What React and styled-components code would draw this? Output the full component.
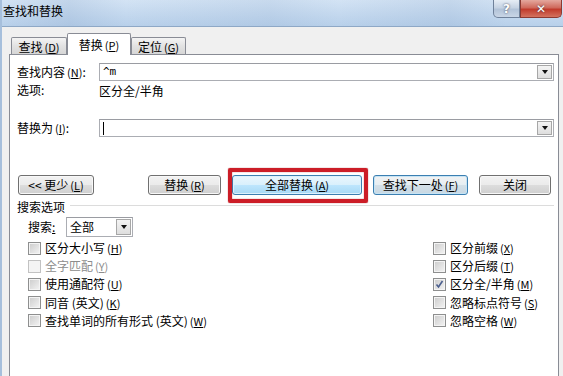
import React from 'react'
import styled, { createGlobalStyle } from 'styled-components'

const GlobalStyle = createGlobalStyle`
  html, body { margin: 0; padding: 0; }
  body {
    width: 563px;
    height: 376px;
    overflow: hidden;
    background: #f0f0f0;
    font-family: "Noto Sans CJK SC", "DejaVu Sans", sans-serif;
    font-size: 12px;
    color: #000;
  }
`

const Window = styled.div`
  display: flex;
  flex-direction: column;
  height: 376px;
  border-left: 2px solid #a6bfdc;
  box-sizing: border-box;
`

const TitleBar = styled.div`
  height: 26px;
  display: flex;
  align-items: flex-start;
  padding-left: 1px;
  background: linear-gradient(90deg, rgba(255,255,255,0) 0%, rgba(120,150,190,0.18) 12%, rgba(255,255,255,0) 22%, rgba(120,150,190,0.12) 48%, rgba(255,255,255,0) 60%, rgba(120,150,190,0.15) 80%, rgba(255,255,255,0) 90%),
    linear-gradient(#d3e3f4, #b8d0ea);
  border-bottom: 1px solid #8ea8c6;
`

const Title = styled.span`
  line-height: 22px;
  flex: 1;
`

const CaptionButton = styled.div`
  height: 18px;
  width: ${p => p.$w}px;
  box-sizing: border-box;
  border: 1px solid ${p => p.$close ? '#8c3a32' : '#6f819a'};
  border-top: none;
  border-radius: ${p => p.$close ? '0 0 5px 0' : '0 0 0 5px'};
  background: ${p => p.$close
    ? 'linear-gradient(#e4a89e, #cf6a5c 45%, #c13b2c 55%, #d4735f)'
    : 'linear-gradient(#e6edf5, #c6d3e3 45%, #b2c3d8 55%, #c9d6e6)'};
  display: flex;
  align-items: center;
  justify-content: center;
  color: #fff;
  font-family: "DejaVu Sans", sans-serif;
  font-weight: bold;
  font-size: 12px;
  text-shadow: 0 0 2px #334;
  margin-right: ${p => p.$close ? 1 : 0}px;
`

const Body = styled.div`
  flex: 1;
  display: flex;
  flex-direction: column;
  padding: 10px 4px 0 7px;
  min-height: 0;
`

const TabStrip = styled.div`
  display: flex;
  align-items: flex-end;
  height: 17px;
  padding-left: 2px;
  position: relative;
  z-index: 1;
`

const Tab = styled.div`
  width: ${p => p.$w}px;
  height: ${p => p.$active ? 22 : 17}px;
  box-sizing: border-box;
  border: 1px solid #898c95;
  border-bottom: none;
  border-radius: 2px 2px 0 0;
  background: ${p => p.$active ? '#fff' : 'linear-gradient(#f4f4f4, #e2e2e2 50%, #d6d6d6)'};
  margin-bottom: ${p => p.$active ? -1 : 0}px;
  display: flex;
  align-items: center;
  justify-content: center;
  padding-top: ${p => p.$active ? 0 : 1}px;
  line-height: 14px;
`

const Panel = styled.div`
  flex: 1;
  background: #fff;
  border: 1px solid #898c95;
  border-bottom: none;
  padding: 8px 4px 0 7px;
  display: flex;
  flex-direction: column;
`

const FieldRow = styled.div`
  display: flex;
  align-items: center;
  margin-top: ${p => p.$mt || 0}px;
  height: ${p => p.$h || 18}px;
`

const Label = styled.span`
  width: ${p => p.$w || 82}px;
  flex: none;
  line-height: 16px;
`

const Combo = styled.div`
  flex: ${p => p.$w ? 'none' : 1};
  width: ${p => p.$w ? p.$w + 'px' : 'auto'};
  height: ${p => p.$h || 18}px;
  box-sizing: border-box;
  border: 1px solid #abadb3;
  border-top-color: #9a9ca2;
  background: #fff;
  display: flex;
  align-items: center;
  padding: 0 1px 0 3px;
`

const ComboText = styled.span`
  flex: 1;
  font-family: ${p => p.$mono ? '"DejaVu Sans Mono", monospace' : 'inherit'};
  font-size: ${p => p.$mono ? 11 : 12}px;
  line-height: 14px;
`

const Caret = styled.span`
  display: block;
  width: 1px;
  height: 13px;
  background: #000;
  flex: none;
`

const Spacer = styled.span`
  flex: 1;
`

const DropButton = styled.span`
  flex: none;
  width: 15px;
  height: ${p => p.$h || 14}px;
  box-sizing: border-box;
  border: 1px solid #a7a7a7;
  background: linear-gradient(#f4f4f4, #dedede);
  display: flex;
  align-items: center;
  justify-content: center;
  &::after {
    content: "";
    border-left: 3.5px solid transparent;
    border-right: 3.5px solid transparent;
    border-top: 4px solid #111;
  }
`

const ButtonRow = styled.div`
  display: flex;
  gap: 11px;
  margin-top: 38px;
  padding-left: 1px;
`

const Button = styled.button`
  width: ${p => p.$w}px;
  height: 20px;
  margin-left: ${p => p.$ml || 0}px;
  padding: 0;
  box-sizing: border-box;
  font: inherit;
  color: #000;
  line-height: 14px;
  border-radius: 3px;
  border: 1px solid ${p => p.$variant ? '#3c7fb1' : '#707070'};
  box-shadow: inset 0 0 0 1px ${p => p.$variant === 'hot' ? '#dcf1fc' : p.$variant ? '#c6e4f5' : '#f8f8f8'};
  background: ${p => p.$variant === 'hot'
    ? 'linear-gradient(#eaf6fd, #d9f0fc 50%, #bee6fd 50%, #a7d9f5)'
    : p.$variant
      ? 'linear-gradient(#f2f2f2, #e6eef3 50%, #d4e0e8 50%, #c8d8e3)'
      : 'linear-gradient(#f2f2f2, #ebebeb 50%, #dddddd 50%, #cfcfcf)'};
  position: relative;
  ${p => p.$marked && `
    &::after {
      content: "";
      position: absolute;
      top: -8px;
      left: -5px;
      right: -7px;
      bottom: -9px;
      border: 4px solid #cc1d27;
      border-radius: 2px;
      box-shadow: 0 0 1px #8a0f14, inset 0 0 1px #8a0f14;
    }
  `}
`

const SectionHeader = styled.div`
  display: flex;
  margin-top: 4px;
  height: 16px;
  line-height: 16px;
  &::after {
    content: "";
    flex: 1;
    margin: 6px 0 0 5px;
    height: 0;
    border-top: 1px solid #dcdcdc;
  }
`

const SearchRow = styled.div`
  display: flex;
  align-items: center;
  margin-top: 2px;
  padding-left: 11px;
  height: 20px;
`

const OptionGrid = styled.div`
  display: grid;
  grid-template-columns: 405px 1fr;
  grid-auto-rows: 18.2px;
  grid-auto-flow: column;
  grid-template-rows: repeat(5, 18.2px);
  margin-top: 2px;
  padding-left: 11px;
`

const Option = styled.label`
  display: flex;
  align-items: center;
  gap: 4px;
  color: ${p => p.$disabled ? '#8d8d8d' : '#000'};
  line-height: 14px;
`

const Box = styled.span`
  width: 13px;
  height: 13px;
  flex: none;
  box-sizing: border-box;
  border: 1px solid ${p => p.$disabled ? '#c2c2c2' : '#8e8f8f'};
  background: ${p => p.$disabled ? '#f4f4f4' : 'linear-gradient(135deg, #cbcbcb, #f4f4f4)'};
  box-shadow: inset 0 0 0 1px ${p => p.$disabled ? '#f4f4f4' : '#f4f4f4'};
  display: flex;
  align-items: center;
  justify-content: center;
`

const Key = styled.span`
  margin-left: 2px;
  font-size: 11px;
  u { text-decoration: underline; }
`

const hk = k => <Key>(<u>{k}</u>)</Key>

function Check({ label, k, checked, disabled }) {
  return (
    <Option $disabled={disabled}>
      <Box $disabled={disabled}>
        {checked && (
          <svg width="9" height="9" viewBox="0 0 9 9">
            <path d="M1.5 4.5 L3.5 7 L7.5 1" fill="none" stroke="#4b5f8e" strokeWidth="1.6" />
          </svg>
        )}
      </Box>
      <span>{label}{hk(k)}</span>
    </Option>
  )
}

const leftOptions = [
  { label: '区分大小写', k: 'H' },
  { label: '全字匹配', k: 'Y', disabled: true },
  { label: '使用通配符', k: 'U' },
  { label: '同音 (英文)', k: 'K' },
  { label: '查找单词的所有形式 (英文)', k: 'W' },
]

const rightOptions = [
  { label: '区分前缀', k: 'X' },
  { label: '区分后缀', k: 'T' },
  { label: '区分全/半角', k: 'M', checked: true },
  { label: '忽略标点符号', k: 'S' },
  { label: '忽略空格', k: 'W' },
]

export default function App() {
  return (
    <>
      <GlobalStyle />
      <Window>
        <TitleBar>
          <Title>查找和替换</Title>
          <CaptionButton $w={27}>?</CaptionButton>
          <CaptionButton $w={42} $close>✕</CaptionButton>
        </TitleBar>
        <Body>
          <TabStrip>
            <Tab $w={56}>查找{hk('D')}</Tab>
            <Tab $w={64} $active>替换{hk('P')}</Tab>
            <Tab $w={55}>定位{hk('G')}</Tab>
          </TabStrip>
          <Panel>
            <FieldRow>
              <Label>查找内容{hk('N')}:</Label>
              <Combo>
                <ComboText $mono>^m</ComboText>
                <DropButton />
              </Combo>
            </FieldRow>
            <FieldRow $mt={1} $h={16}>
              <Label>选项:</Label>
              <span>区分全/半角</span>
            </FieldRow>
            <FieldRow $mt={21}>
              <Label>替换为{hk('I')}:</Label>
              <Combo>
                <Caret />
                <Spacer />
                <DropButton />
              </Combo>
            </FieldRow>
            <ButtonRow>
              <Button $w={76}>&lt;&lt; 更少{hk('L')}</Button>
              <Button $w={73} $ml={43}>替换{hk('R')}</Button>
              <Button $w={130} $variant="hot" $marked>全部替换{hk('A')}</Button>
              <Button $w={95} $variant="default">查找下一处{hk('F')}</Button>
              <Button $w={72}>关闭</Button>
            </ButtonRow>
            <SectionHeader>搜索选项</SectionHeader>
            <SearchRow>
              <Label $w={38}>搜索<u>:</u></Label>
              <Combo $w={67} $h={20}>
                <ComboText>全部</ComboText>
                <DropButton $h={16} />
              </Combo>
            </SearchRow>
            <OptionGrid>
              {leftOptions.map(o => <Check key={o.label} {...o} />)}
              {rightOptions.map(o => <Check key={o.label} {...o} />)}
            </OptionGrid>
          </Panel>
        </Body>
      </Window>
    </>
  )
}
